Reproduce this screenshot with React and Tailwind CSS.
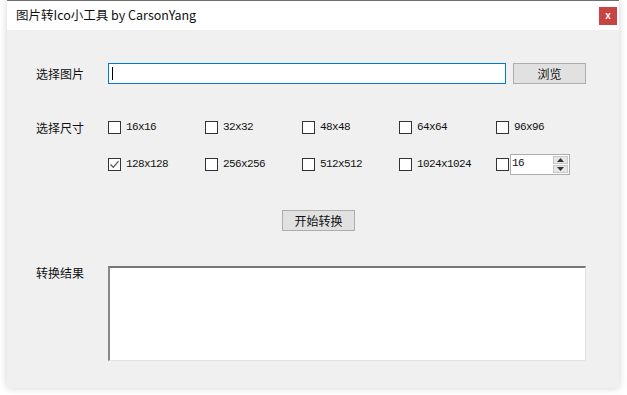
import React from "react";

const cjk = { fontFamily: '"Noto Sans CJK SC", "Microsoft YaHei", sans-serif' };
const mono = { fontFamily: '"Liberation Mono", "Noto Sans CJK SC", monospace' };

function Box({ checked }) {
  return (
    <span className="w-[13px] h-[13px] border border-[#333] bg-white flex items-center justify-center shrink-0">
      {checked && (
        <svg width="11" height="11" viewBox="0 0 11 11">
          <path d="M1.5 5.5 L4.3 8.3 L9.5 2.2" fill="none" stroke="#555" strokeWidth="1.3" />
        </svg>
      )}
    </span>
  );
}

function Check({ label, checked }) {
  return (
    <div className="w-[97px] flex items-center h-[21px]">
      <Box checked={checked} />
      <span className="ml-[5px] text-[11px] tracking-[-0.6px] text-[#111]" style={mono}>
        {label}
      </span>
    </div>
  );
}

function Spinner() {
  return (
    <div className="w-[97px] flex items-center h-[21px]">
      <Box />
      <div className="ml-px w-[60px] h-[21px] border border-[#acacac] bg-white flex">
        <span className="flex-1 text-[11px] tracking-[-0.6px] pl-[1px] leading-[16px] text-[#111]" style={mono}>
          16
        </span>
        <div className="w-[15px] flex flex-col my-[1px] mr-[1px] gap-px">
          <div className="flex-1 bg-[#e6e6e6] border border-[#c8c8c8] flex items-center justify-center">
            <svg width="7" height="4" viewBox="0 0 7 4"><path d="M0 4 L3.5 0 L7 4Z" fill="#333" /></svg>
          </div>
          <div className="flex-1 bg-[#e6e6e6] border border-[#c8c8c8] flex items-center justify-center">
            <svg width="7" height="4" viewBox="0 0 7 4"><path d="M0 0 L3.5 4 L7 0Z" fill="#333" /></svg>
          </div>
        </div>
      </div>
    </div>
  );
}

export default function App() {
  return (
    <div className="w-[627px] h-[395px] bg-white overflow-hidden" style={cjk}>
      <div className="ml-[7px] w-[612px] h-[388px] flex flex-col bg-[#f0f0f0] border-t border-[#6e6e6e] shadow-[0_0_8px_rgba(0,0,0,0.18)]">
        <div className="h-[29px] bg-white flex items-center justify-between pl-[9px] pr-[2px]">
          <span className="text-[12.5px] text-[#111] leading-none">图片转Ico小工具 by CarsonYang</span>
          <div className="w-[18px] h-[18px] bg-[#c94343] flex items-center justify-center text-white text-[10px] font-bold leading-none" style={{ fontFamily: '"Liberation Sans", sans-serif' }}>
            x
          </div>
        </div>

        <div className="flex flex-col pl-[29px]">
          <div className="flex items-center mt-[33px] h-[21px]">
            <span className="w-[72px] text-[12px] text-[#111]">选择图片</span>
            <div className="w-[398px] h-[21px] border border-[#0078d7] bg-white flex items-center pl-[3px]">
              <span className="w-px h-[13px] bg-black" />
            </div>
            <button className="ml-[7px] w-[73px] h-[21px] bg-[#e1e1e1] border border-[#adadad] text-[12px] text-[#111]">
              浏览
            </button>
          </div>

          <div className="flex mt-[33px]">
            <span className="w-[72px] text-[12px] text-[#111] leading-[21px]">选择尺寸</span>
            <div className="flex flex-col gap-[16px]">
              <div className="flex">
                <Check label="16x16" />
                <Check label="32x32" />
                <Check label="48x48" />
                <Check label="64x64" />
                <Check label="96x96" />
              </div>
              <div className="flex">
                <Check label="128x128" checked />
                <Check label="256x256" />
                <Check label="512x512" />
                <Check label="1024x1024" />
                <Spinner />
              </div>
            </div>
          </div>

          <div className="flex mt-[35px] pl-[246px]">
            <button className="w-[73px] h-[21px] bg-[#e1e1e1] border border-[#adadad] text-[12px] text-[#111]">
              开始转换
            </button>
          </div>

          <div className="flex mt-[35px]">
            <span className="w-[72px] text-[12px] text-[#111] leading-none pt-[1px]">转换结果</span>
            <div className="w-[478px] h-[95px] bg-white border-t-2 border-l-2 border-t-[#777] border-l-[#888] border-r border-b border-r-[#e3e3e3] border-b-[#e3e3e3]" />
          </div>
        </div>
      </div>
    </div>
  );
}
